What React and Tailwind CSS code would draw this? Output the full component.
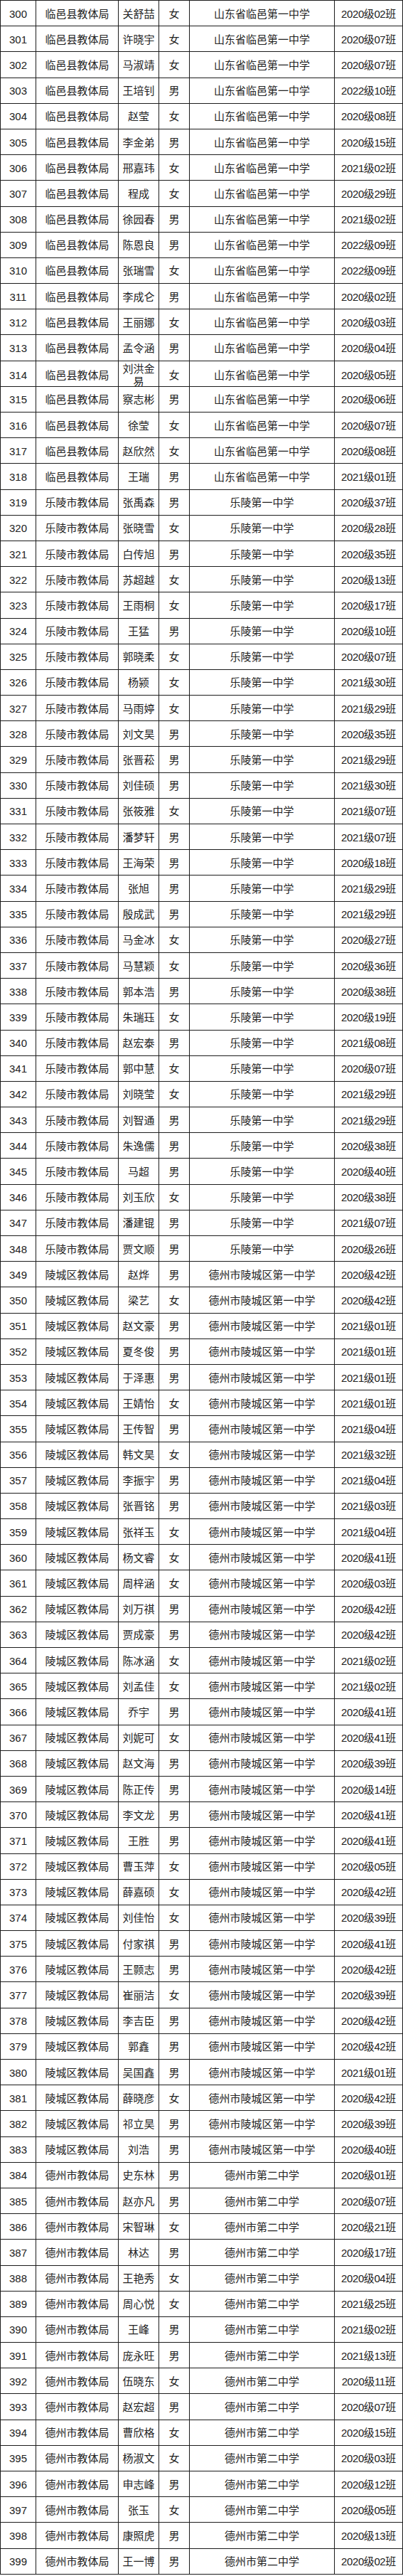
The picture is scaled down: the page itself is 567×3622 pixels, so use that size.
import React from 'react';

// 每组：教体局、学校、学生（姓名 性别 班级）
const groups = [
  {
    bureau: '临邑县教体局',
    school: '山东省临邑第一中学',
    students: [
      '关舒喆 女 2020级02班', '许晓宇 女 2020级07班', '马淑靖 女 2020级07班', '王培钊 男 2022级10班',
      '赵莹 女 2020级08班', '李金弟 男 2020级15班', '邢嘉玮 女 2021级02班', '程成 女 2020级29班',
      '徐园春 男 2021级02班', '陈恩良 男 2022级09班', '张瑞雪 女 2022级09班', '李成仑 男 2020级02班',
      '王丽娜 女 2020级03班', '孟令涵 男 2020级04班', '刘洪金易 女 2020级05班', '察志彬 男 2020级06班',
      '徐莹 女 2020级07班', '赵欣然 女 2020级08班', '王瑞 男 2021级01班',
    ],
  },
  {
    bureau: '乐陵市教体局',
    school: '乐陵第一中学',
    students: [
      '张禹森 男 2020级37班', '张晓雪 女 2020级28班', '白传旭 男 2020级35班', '苏超越 女 2020级13班',
      '王雨桐 女 2020级17班', '王猛 男 2020级10班', '郭晓柔 女 2020级07班', '杨颍 女 2021级30班',
      '马雨婷 女 2021级29班', '刘文昊 男 2020级35班', '张晋菘 男 2021级29班', '刘佳硕 男 2021级30班',
      '张筱雅 女 2021级07班', '潘梦轩 男 2021级07班', '王海荣 男 2020级18班', '张旭 男 2021级29班',
      '殷成武 男 2021级29班', '马金冰 女 2020级27班', '马慧颖 女 2020级36班', '郭本浩 男 2020级38班',
      '朱瑞珏 女 2020级19班', '赵宏泰 男 2021级08班', '郭中慧 女 2020级07班', '刘晓莹 女 2021级29班',
      '刘智通 男 2021级29班', '朱逸儒 男 2020级38班', '马超 男 2020级40班', '刘玉欣 女 2020级38班',
      '潘建锟 男 2021级07班', '贾文顺 男 2020级26班',
    ],
  },
  {
    bureau: '陵城区教体局',
    school: '德州市陵城区第一中学',
    students: [
      '赵烨 男 2020级42班', '梁艺 女 2020级42班', '赵文豪 男 2021级01班', '夏冬俊 男 2021级01班',
      '于泽惠 男 2021级01班', '王婧怡 女 2021级01班', '王传智 男 2021级04班', '韩文昊 女 2021级32班',
      '李振宇 男 2021级04班', '张晋铭 男 2021级03班', '张祥玉 女 2021级04班', '杨文睿 女 2020级41班',
      '周梓涵 女 2020级03班', '刘万祺 男 2020级42班', '贾成豪 男 2020级42班', '陈冰涵 女 2021级02班',
      '刘孟佳 女 2021级02班', '乔宇 男 2020级41班', '刘妮可 女 2020级41班', '赵文海 男 2020级39班',
      '陈正传 男 2020级14班', '李文龙 男 2020级41班', '王胜 男 2020级41班', '曹玉萍 女 2020级05班',
      '薛嘉硕 女 2020级42班', '刘佳怡 女 2020级39班', '付家祺 男 2020级41班', '王颢志 男 2020级42班',
      '崔丽洁 女 2020级39班', '李吉臣 男 2020级42班', '郭鑫 男 2020级42班', '吴国鑫 男 2021级01班',
      '薛晓彦 女 2020级42班', '祁立昊 男 2020级39班', '刘浩 男 2020级40班',
    ],
  },
  {
    bureau: '德州市教体局',
    school: '德州市第二中学',
    students: [
      '史东林 男 2020级01班', '赵亦凡 男 2020级07班', '宋智琳 女 2020级21班', '林达 男 2020级17班',
      '王艳秀 女 2020级04班', '周心悦 女 2021级25班', '王峰 男 2021级02班', '庞永旺 男 2021级13班',
      '伍晓东 女 2020级11班', '赵宏超 男 2020级07班', '曹欣格 女 2020级15班', '杨淑文 女 2020级03班',
      '申志峰 男 2020级12班', '张玉 女 2020级05班', '康照虎 男 2020级13班', '王一博 男 2020级02班',
    ],
  },
];

const rows = [];
let no = 300;
for (const g of groups) {
  for (const s of g.students) {
    const [name, gender, cls] = s.split(' ');
    rows.push({ no: no++, bureau: g.bureau, name, gender, school: g.school, cls });
  }
}

const cell = 'flex items-center justify-center text-center border-r border-[#1c1c1c] leading-[18px]';

export default function App() {
  return (
    <div
      className="w-[567px] bg-white text-[#222] text-[15px]"
      style={{ fontFamily: '"Liberation Sans", "Noto Sans CJK SC", sans-serif' }}
    >
      <div className="border-t border-l border-[#1c1c1c]">
        {rows.map((r) => (
          <div
            key={r.no}
            className="grid grid-cols-[50px_116px_57px_43px_204px_96px] h-[36.2px] border-b border-[#1c1c1c]"
          >
            <div className={cell + ' pt-[2px]'}>{r.no}</div>
            <div className={cell + ' pt-[2px]'}>{r.bureau}</div>
            <div className={cell + ' px-[3px] pt-[2px]'}>{r.name}</div>
            <div className={cell + ' pt-[2px]'}>{r.gender}</div>
            <div className={cell + ' pt-[2px]'}>{r.school}</div>
            <div className={cell + ' pt-[2px] tracking-[-0.4px]'}>{r.cls}</div>
          </div>
        ))}
      </div>
    </div>
  );
}
